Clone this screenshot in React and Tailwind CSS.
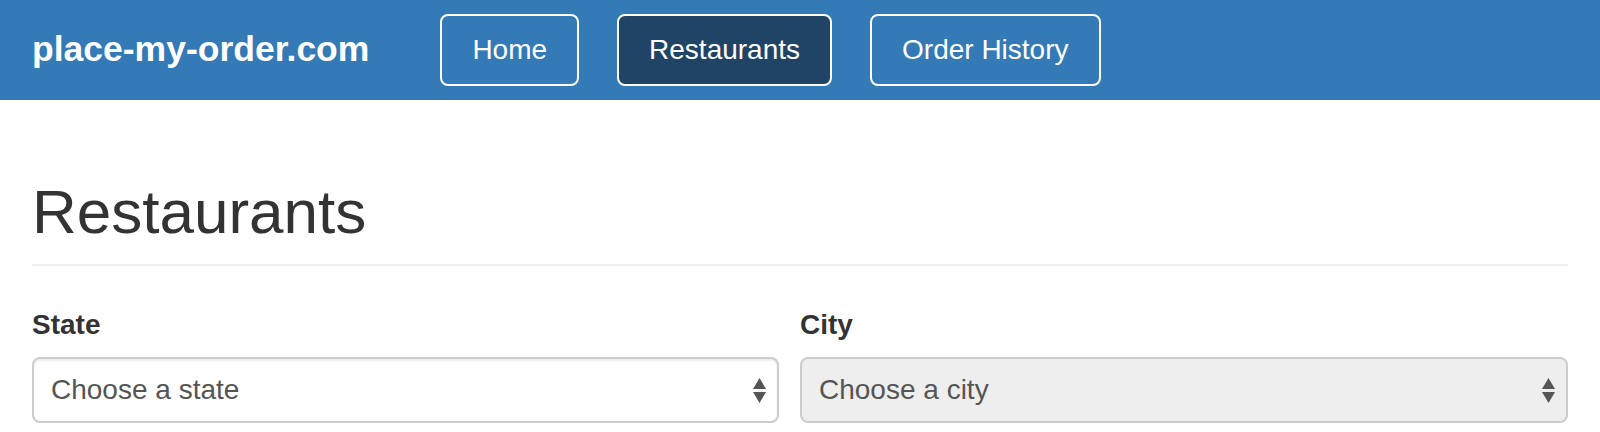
import React from 'react';

const links = [
  { key: 'home', label: 'Home' },
  { key: 'restaurants', label: 'Restaurants' },
  { key: 'history', label: 'Order History' },
];

const Arrows = () => (
  <svg width="13" height="25" viewBox="0 0 13 25" className="shrink-0">
    <polygon points="6.5,0 13,11 0,11" fill="#555" />
    <polygon points="0,14 13,14 6.5,25" fill="#555" />
  </svg>
);

const Field = ({ label, placeholder, disabled }) => (
  <div className="flex flex-col">
    <label className="text-[28px] leading-[40px] font-bold text-[#333]">{label}</label>
    <div
      className={`mt-[12px] h-[66px] flex items-center justify-between pl-[17px] pr-[11px] border-2 border-[#ccc] rounded-[8px] ${
        disabled ? 'bg-[#eee]' : 'bg-white shadow-[inset_0_2px_2px_rgba(0,0,0,0.075)]'
      }`}
    >
      <span className="text-[28px] text-[#555]">{placeholder}</span>
      <Arrows />
    </div>
  </div>
);

const App = () => {
  const active = 'restaurants';

  return (
    <div className="min-h-screen bg-white" style={{ fontFamily: "'Liberation Sans', Arial, sans-serif" }}>
      <header className="h-[100px] bg-[#337ab7] flex items-center px-8">
        <a href="#" className="text-[35.5px] font-bold text-white mb-[1px]">place-my-order.com</a>
        <nav className="flex gap-[38px] ml-[71px]">
          {links.map((item) => (
            <a
              key={item.key}
              href="#"
              className={`h-[72px] flex items-center px-[30px] border-2 border-white rounded-[8px] text-[28px] text-white ${
                active === item.key ? 'bg-[#1f4466]' : ''
              }`}
            >
              {item.label}
            </a>
          ))}
        </nav>
      </header>
      <main className="px-8">
        <h1 className="mt-[79px] text-[62px] leading-[65px] text-[#333]">Restaurants</h1>
        <div className="mt-[20px] h-[2px] bg-[#eee]" />
        <div className="mt-[39px] grid grid-cols-[747px_1fr] gap-x-[21px]">
          <Field label="State" placeholder="Choose a state" />
          <Field label="City" placeholder="Choose a city" disabled />
        </div>
      </main>
    </div>
  );
};

export default App;
